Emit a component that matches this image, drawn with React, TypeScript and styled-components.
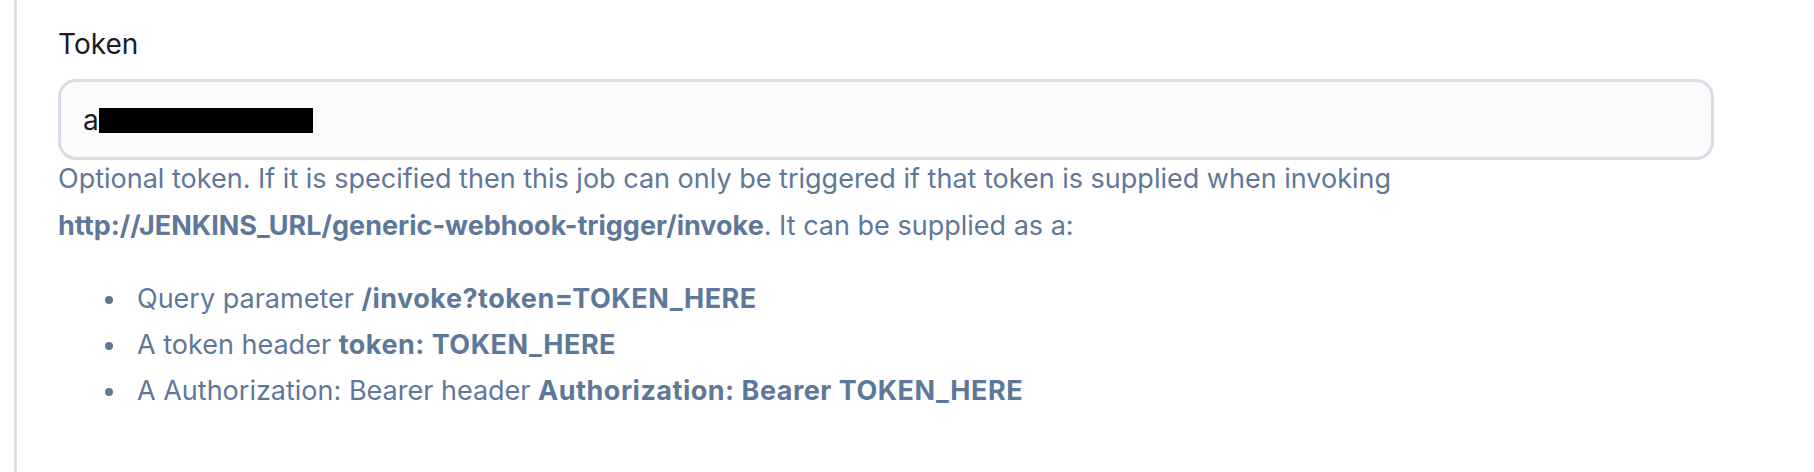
import styled, { createGlobalStyle } from 'styled-components';

const GlobalStyle = createGlobalStyle`
  html, body {
    margin: 0;
    padding: 0;
    background: #ffffff;
  }
  body {
    font-family: Inter, "Noto Sans", "Liberation Sans", sans-serif;
  }
`;

const Section = styled.section`
  margin-left: 14px;
  min-height: 472px;
  box-sizing: border-box;
  border-left: 3px solid #d8e0e9;
  padding: 26px 100px 0 41px;
`;

const Label = styled.div`
  font-size: 28px;
  line-height: 36px;
  color: #1b1b24;
  font-weight: 400;
  margin-bottom: 17px;
`;

const InputBox = styled.div`
  display: flex;
  align-items: center;
  box-sizing: border-box;
  height: 81px;
  padding: 0 22px;
  border: 3px solid #d6dde7;
  border-radius: 18px;
  background: #fbfbfc;
  font-size: 28px;
  color: #1b1b24;
`;

const Redacted = styled.span`
  display: inline-block;
  width: 214px;
  height: 25px;
  margin-top: 2px;
  background: #000000;
`;

const Help = styled.div`
  margin-top: -5px;
  font-size: 27px;
  line-height: 47px;
  color: #5e7899;
  b {
    font-weight: 700;
    white-space: nowrap;
  }
`;

const List = styled.ul`
  margin: 27px 0 0 0;
  padding-left: 79px;
  line-height: 46px;
  list-style: none;
  b {
    letter-spacing: 0.5px;
  }
`;

const Item = styled.li`
  position: relative;
  &::before {
    content: '';
    position: absolute;
    left: -32px;
    top: 20px;
    width: 8px;
    height: 8px;
    border-radius: 50%;
    background: #5e7899;
  }
`;

const App = () => {
  return (
    <>
      <GlobalStyle />
      <Section>
        <Label>Token</Label>
        <InputBox>
          a<Redacted />
        </InputBox>
        <Help>
          <div>
            Optional token. If it is specified then this job can only be triggered if that token is supplied when
            invoking <b>http://JENKINS_URL/generic-webhook-trigger/invoke</b>. It can be supplied as a:
          </div>
          <List>
            <Item>
              Query parameter <b>/invoke?token=TOKEN_HERE</b>
            </Item>
            <Item>
              A token header <b>token: TOKEN_HERE</b>
            </Item>
            <Item>
              A Authorization: Bearer header <b>Authorization: Bearer TOKEN_HERE</b>
            </Item>
          </List>
        </Help>
      </Section>
    </>
  );
};

export default App;
